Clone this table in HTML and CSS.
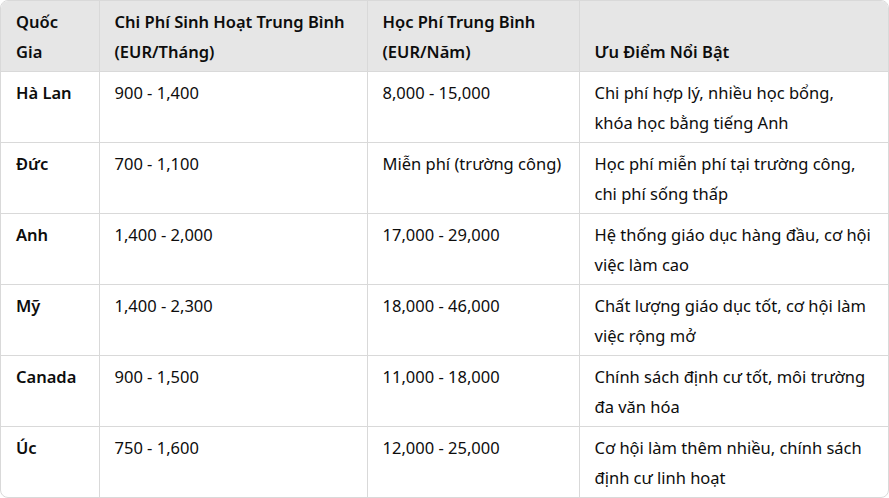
FILE: index.html
```html
<!DOCTYPE html>
<html lang="vi">
<head>
<meta charset="utf-8">
<link rel="stylesheet" href="styles.css">
</head>
<body>
<div class="wrap">
<table class="tbl">
<colgroup><col class="c1"><col class="c2"><col class="c3"><col class="c4"></colgroup>
<thead>
<tr><th>Quốc Gia</th><th>Chi Phí Sinh Hoạt Trung Bình (EUR/Tháng)</th><th>Học Phí Trung Bình (EUR/Năm)</th><th>Ưu Điểm Nổi Bật</th></tr>
</thead>
<tbody>
<tr><td class="b">Hà Lan</td><td>900 - 1,400</td><td>8,000 - 15,000</td><td>Chi phí hợp lý, nhiều học bổng, khóa học bằng tiếng Anh</td></tr>
<tr><td class="b">Đức</td><td>700 - 1,100</td><td>Miễn phí (trường công)</td><td>Học phí miễn phí tại trường công, chi phí sống thấp</td></tr>
<tr><td class="b">Anh</td><td>1,400 - 2,000</td><td>17,000 - 29,000</td><td>Hệ thống giáo dục hàng đầu, cơ hội việc làm cao</td></tr>
<tr><td class="b">Mỹ</td><td>1,400 - 2,300</td><td>18,000 - 46,000</td><td>Chất lượng giáo dục tốt, cơ hội làm việc rộng mở</td></tr>
<tr><td class="b">Canada</td><td>900 - 1,500</td><td>11,000 - 18,000</td><td>Chính sách định cư tốt, môi trường đa văn hóa</td></tr>
<tr><td class="b">Úc</td><td>750 - 1,600</td><td>12,000 - 25,000</td><td>Cơ hội làm thêm nhiều, chính sách định cư linh hoạt</td></tr>
</tbody>
</table>
</div>
</body>
</html>
```
FILE: styles.css
```css
html, body { margin: 0; padding: 0; background: #fff; }
body { font-family: "Noto Sans", "Open Sans", sans-serif; font-size: 16.5px; color: #0d0d0d; }
.wrap { width: 889px; height: 498px; box-sizing: border-box; border: 1px solid #d9d9d9; border-radius: 8px; overflow: hidden; }
.tbl { width: 100%; border-collapse: collapse; table-layout: fixed; }
.c1 { width: 98px; }
.c2 { width: 268px; }
.c3 { width: 212px; }
.c4 { width: auto; }
th, td { text-align: left; padding: 6px 15px 4px 15px; line-height: 30px; height: 60px; box-sizing: content-box; border-right: 1px solid #d9d9d9; border-bottom: 1px solid #d9d9d9; }
th:last-child, td:last-child { border-right: none; }
tbody tr:last-child td { border-bottom: none; }
th { background: #e6e6e6; font-weight: 600; vertical-align: bottom; }
td { vertical-align: top; font-weight: 400; }
td.b { font-weight: 600; }
```
